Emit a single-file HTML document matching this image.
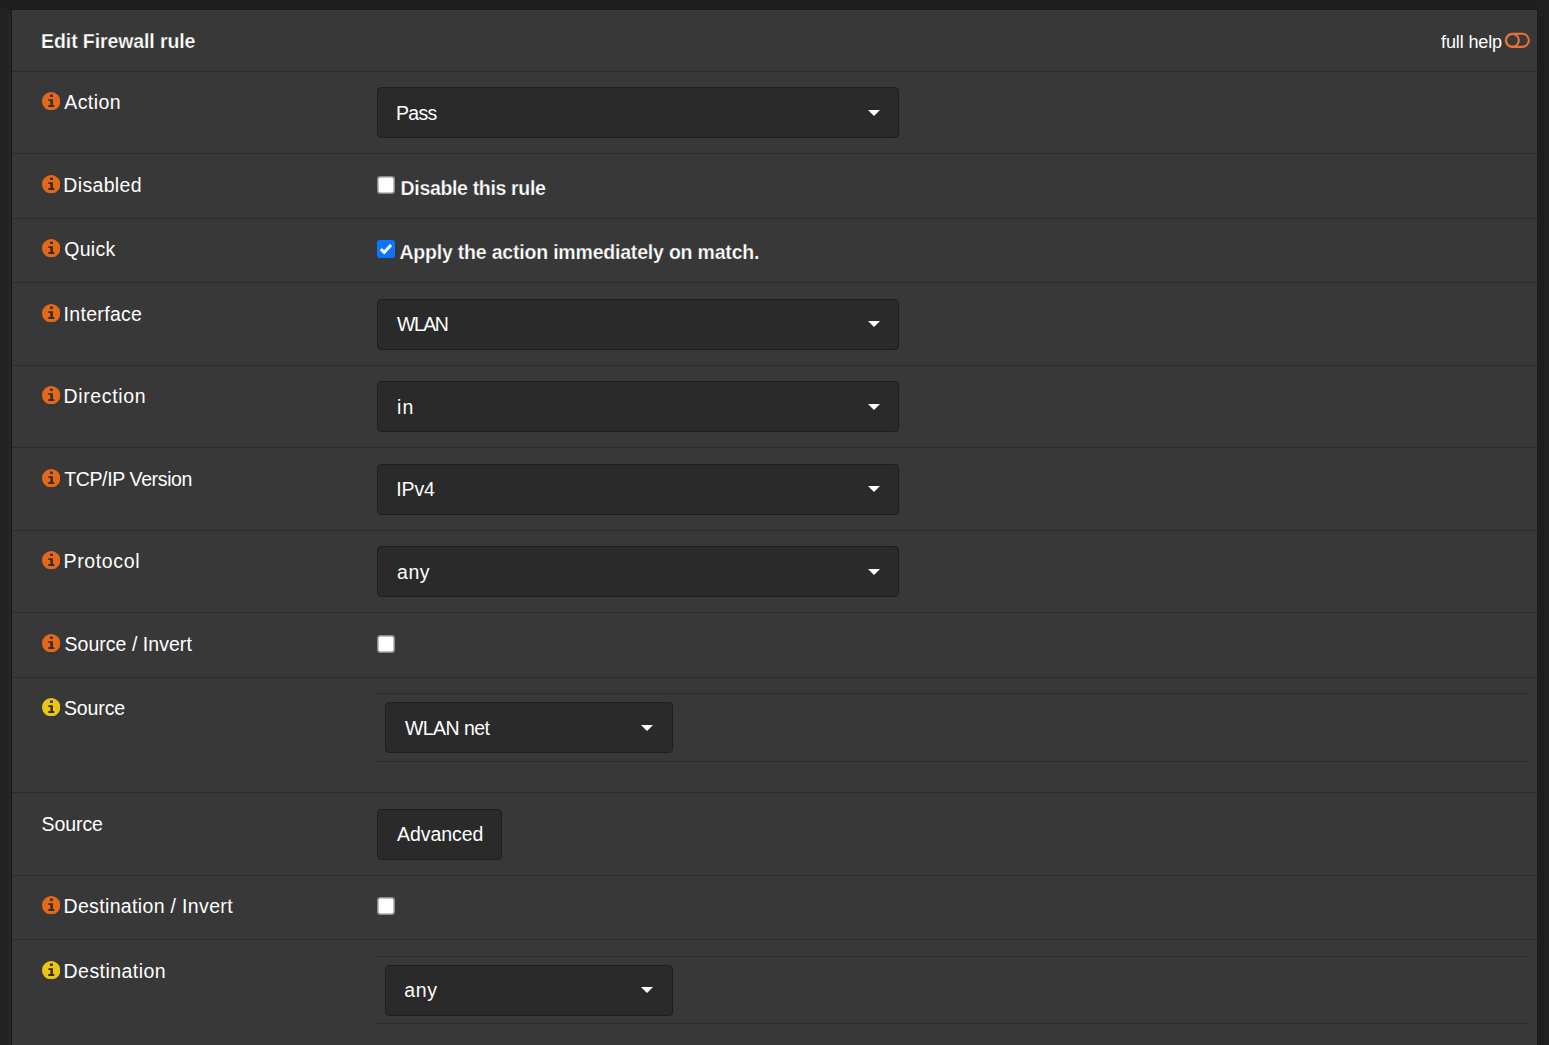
<!DOCTYPE html>
<html><head><meta charset="utf-8"><style>
html,body{margin:0;padding:0;}
body{width:1549px;height:1045px;overflow:hidden;background:#222;position:relative;font-family:"Liberation Sans",sans-serif;color:#ffffff;}
.topstrip{position:absolute;left:0;top:0;width:1549px;height:9px;background:#1f1f1f;}
.rstrip{position:absolute;left:1538px;top:0;width:11px;height:1045px;background:#202020;}
.lstrip{position:absolute;left:8px;top:14px;width:3px;height:1031px;background:#252525;}
.rstrip2{position:absolute;left:1539px;top:16px;width:5px;height:1029px;background:#1c1c1c;}
.panel{position:absolute;left:11px;top:9px;width:1525px;height:1100px;background:#383838;border:1px solid #1a1a1a;}
.t{position:absolute;white-space:nowrap;}
.ic{position:absolute;display:block;}
.sep{position:absolute;left:12px;width:1525px;height:1px;background:#2b2b2b;}
.nsep{position:absolute;left:376px;width:1152px;height:1px;background:#2b2b2b;}
.sel{position:absolute;box-sizing:border-box;background:#2a2a2a;border:1px solid #1e1e1e;border-radius:4px;}
.caret{position:absolute;width:0;height:0;border-left:6.3px solid transparent;border-right:6.3px solid transparent;border-top:6.3px solid #fff;}
</style></head><body>
<div class="topstrip"></div><div class="rstrip"></div><div class="rstrip2"></div><div class="lstrip"></div>
<div class="panel"></div>
<div class="t" style="left:41.10px;top:31.24px;font-size:19.5px;line-height:20px;font-weight:bold;-webkit-text-stroke:0.25px #383838;letter-spacing:-0.100px;">Edit Firewall rule</div>
<div class="t" style="left:1441.00px;top:32.76px;font-size:18px;line-height:18px;letter-spacing:-0.125px;">full help</div>
<svg class="ic" style="left:1504px;top:31px" width="27" height="19" viewBox="0 0 27 19"><rect x="1.9" y="2.8" width="22.9" height="13.1" rx="6.55" fill="none" stroke="#e3733a" stroke-width="2.1"/><circle cx="8.45" cy="9.35" r="6.4" fill="none" stroke="#e3733a" stroke-width="2.1"/></svg>
<div class="sep" style="top:71px"></div>
<div class="sep" style="top:153px"></div>
<div class="sep" style="top:218px"></div>
<div class="sep" style="top:282px"></div>
<div class="sep" style="top:365px"></div>
<div class="sep" style="top:447px"></div>
<div class="sep" style="top:530px"></div>
<div class="sep" style="top:612px"></div>
<div class="sep" style="top:677px"></div>
<div class="sep" style="top:792px"></div>
<div class="sep" style="top:875px"></div>
<div class="sep" style="top:939px"></div>
<div class="t" style="left:64.20px;top:91.74px;font-size:19.5px;line-height:20px;letter-spacing:0.440px;">Action</div>
<svg class="ic" style="left:41.80px;top:91.80px" width="18.4" height="18.4" viewBox="0 0 18 18"><circle cx="9" cy="9" r="9" fill="#e2691b"/><g fill="#3a2c22"><rect x="7.9" y="2.5" width="2.7" height="2.3" rx="0.3"/><path d="M6.2 7.2H10.7V12.8H12.0V14.7H6.2V12.8H8.2V8.8H6.2Z"/></g></svg>
<div class="t" style="left:63.30px;top:174.74px;font-size:19.5px;line-height:20px;letter-spacing:0.343px;">Disabled</div>
<svg class="ic" style="left:41.80px;top:174.80px" width="18.4" height="18.4" viewBox="0 0 18 18"><circle cx="9" cy="9" r="9" fill="#e2691b"/><g fill="#3a2c22"><rect x="7.9" y="2.5" width="2.7" height="2.3" rx="0.3"/><path d="M6.2 7.2H10.7V12.8H12.0V14.7H6.2V12.8H8.2V8.8H6.2Z"/></g></svg>
<div class="t" style="left:64.30px;top:238.74px;font-size:19.5px;line-height:20px;letter-spacing:0.275px;">Quick</div>
<svg class="ic" style="left:41.80px;top:238.80px" width="18.4" height="18.4" viewBox="0 0 18 18"><circle cx="9" cy="9" r="9" fill="#e2691b"/><g fill="#3a2c22"><rect x="7.9" y="2.5" width="2.7" height="2.3" rx="0.3"/><path d="M6.2 7.2H10.7V12.8H12.0V14.7H6.2V12.8H8.2V8.8H6.2Z"/></g></svg>
<div class="t" style="left:63.60px;top:303.74px;font-size:19.5px;line-height:20px;letter-spacing:0.312px;">Interface</div>
<svg class="ic" style="left:41.80px;top:303.80px" width="18.4" height="18.4" viewBox="0 0 18 18"><circle cx="9" cy="9" r="9" fill="#e2691b"/><g fill="#3a2c22"><rect x="7.9" y="2.5" width="2.7" height="2.3" rx="0.3"/><path d="M6.2 7.2H10.7V12.8H12.0V14.7H6.2V12.8H8.2V8.8H6.2Z"/></g></svg>
<div class="t" style="left:63.50px;top:385.74px;font-size:19.5px;line-height:20px;letter-spacing:0.637px;">Direction</div>
<svg class="ic" style="left:41.80px;top:385.80px" width="18.4" height="18.4" viewBox="0 0 18 18"><circle cx="9" cy="9" r="9" fill="#e2691b"/><g fill="#3a2c22"><rect x="7.9" y="2.5" width="2.7" height="2.3" rx="0.3"/><path d="M6.2 7.2H10.7V12.8H12.0V14.7H6.2V12.8H8.2V8.8H6.2Z"/></g></svg>
<div class="t" style="left:64.20px;top:468.74px;font-size:19.5px;line-height:20px;letter-spacing:-0.362px;">TCP/IP Version</div>
<svg class="ic" style="left:41.80px;top:468.80px" width="18.4" height="18.4" viewBox="0 0 18 18"><circle cx="9" cy="9" r="9" fill="#e2691b"/><g fill="#3a2c22"><rect x="7.9" y="2.5" width="2.7" height="2.3" rx="0.3"/><path d="M6.2 7.2H10.7V12.8H12.0V14.7H6.2V12.8H8.2V8.8H6.2Z"/></g></svg>
<div class="t" style="left:63.50px;top:550.74px;font-size:19.5px;line-height:20px;letter-spacing:0.643px;">Protocol</div>
<svg class="ic" style="left:41.80px;top:550.80px" width="18.4" height="18.4" viewBox="0 0 18 18"><circle cx="9" cy="9" r="9" fill="#e2691b"/><g fill="#3a2c22"><rect x="7.9" y="2.5" width="2.7" height="2.3" rx="0.3"/><path d="M6.2 7.2H10.7V12.8H12.0V14.7H6.2V12.8H8.2V8.8H6.2Z"/></g></svg>
<div class="t" style="left:64.50px;top:633.74px;font-size:19.5px;line-height:20px;letter-spacing:0.036px;">Source / Invert</div>
<svg class="ic" style="left:41.80px;top:633.80px" width="18.4" height="18.4" viewBox="0 0 18 18"><circle cx="9" cy="9" r="9" fill="#e2691b"/><g fill="#3a2c22"><rect x="7.9" y="2.5" width="2.7" height="2.3" rx="0.3"/><path d="M6.2 7.2H10.7V12.8H12.0V14.7H6.2V12.8H8.2V8.8H6.2Z"/></g></svg>
<div class="t" style="left:63.90px;top:697.74px;font-size:19.5px;line-height:20px;letter-spacing:-0.100px;">Source</div>
<svg class="ic" style="left:41.80px;top:697.80px" width="18.4" height="18.4" viewBox="0 0 18 18"><circle cx="9" cy="9" r="9" fill="#eac513"/><g fill="#3a2c22"><rect x="7.9" y="2.5" width="2.7" height="2.3" rx="0.3"/><path d="M6.2 7.2H10.7V12.8H12.0V14.7H6.2V12.8H8.2V8.8H6.2Z"/></g></svg>
<div class="t" style="left:41.60px;top:813.74px;font-size:19.5px;line-height:20px;letter-spacing:-0.100px;">Source</div>
<div class="t" style="left:63.50px;top:895.74px;font-size:19.5px;line-height:20px;letter-spacing:0.342px;">Destination / Invert</div>
<svg class="ic" style="left:41.80px;top:895.80px" width="18.4" height="18.4" viewBox="0 0 18 18"><circle cx="9" cy="9" r="9" fill="#e2691b"/><g fill="#3a2c22"><rect x="7.9" y="2.5" width="2.7" height="2.3" rx="0.3"/><path d="M6.2 7.2H10.7V12.8H12.0V14.7H6.2V12.8H8.2V8.8H6.2Z"/></g></svg>
<div class="t" style="left:63.60px;top:960.74px;font-size:19.5px;line-height:20px;letter-spacing:0.440px;">Destination</div>
<svg class="ic" style="left:41.80px;top:960.80px" width="18.4" height="18.4" viewBox="0 0 18 18"><circle cx="9" cy="9" r="9" fill="#eac513"/><g fill="#3a2c22"><rect x="7.9" y="2.5" width="2.7" height="2.3" rx="0.3"/><path d="M6.2 7.2H10.7V12.8H12.0V14.7H6.2V12.8H8.2V8.8H6.2Z"/></g></svg>
<div class="sel" style="left:377px;top:87px;width:522px;height:51px"></div>
<div class="t" style="left:396.10px;top:103.24px;font-size:19.5px;line-height:20px;letter-spacing:-0.767px;">Pass</div>
<div class="caret" style="left:868px;top:109.7px"></div>
<div class="sel" style="left:377px;top:299px;width:522px;height:51px"></div>
<div class="t" style="left:397.10px;top:314.24px;font-size:19.5px;line-height:20px;letter-spacing:-1.533px;">WLAN</div>
<div class="caret" style="left:868px;top:320.7px"></div>
<div class="sel" style="left:377px;top:381px;width:522px;height:51px"></div>
<div class="t" style="left:396.90px;top:397.24px;font-size:19.5px;line-height:20px;letter-spacing:1.400px;">in</div>
<div class="caret" style="left:868px;top:403.7px"></div>
<div class="sel" style="left:377px;top:464px;width:522px;height:51px"></div>
<div class="t" style="left:396.20px;top:479.24px;font-size:19.5px;line-height:20px;letter-spacing:-0.100px;">IPv4</div>
<div class="caret" style="left:868px;top:485.7px"></div>
<div class="sel" style="left:377px;top:546px;width:522px;height:51px"></div>
<div class="t" style="left:397.10px;top:562.24px;font-size:19.5px;line-height:20px;letter-spacing:0.450px;">any</div>
<div class="caret" style="left:868px;top:568.7px"></div>
<svg class="ic" style="left:377px;top:176px" width="18" height="18" viewBox="0 0 18 18"><rect x="0.75" y="0.75" width="16.5" height="16.5" rx="2.5" fill="#fff" stroke="#8a8a8a" stroke-width="1.5"/></svg>
<div class="t" style="left:400.60px;top:178.24px;font-size:19.5px;line-height:20px;font-weight:bold;-webkit-text-stroke:0.25px #383838;letter-spacing:-0.337px;">Disable this rule</div>
<svg class="ic" style="left:377px;top:240px" width="18" height="18" viewBox="0 0 18 18"><rect x="0" y="0" width="18" height="18" rx="3" fill="#0b75ff"/><path d="M3.8 9.1L7.2 12.4L14 5" stroke="#fff" stroke-width="3" fill="none" stroke-linecap="butt"/></svg>
<div class="t" style="left:399.40px;top:242.24px;font-size:19.5px;line-height:20px;font-weight:bold;-webkit-text-stroke:0.25px #383838;letter-spacing:-0.197px;">Apply the action immediately on match.</div>
<svg class="ic" style="left:377px;top:635px" width="18" height="18" viewBox="0 0 18 18"><rect x="0.75" y="0.75" width="16.5" height="16.5" rx="2.5" fill="#fff" stroke="#8a8a8a" stroke-width="1.5"/></svg>
<svg class="ic" style="left:377px;top:897px" width="18" height="18" viewBox="0 0 18 18"><rect x="0.75" y="0.75" width="16.5" height="16.5" rx="2.5" fill="#fff" stroke="#8a8a8a" stroke-width="1.5"/></svg>
<div class="nsep" style="top:693px"></div>
<div class="nsep" style="top:761px"></div>
<div class="nsep" style="top:956px"></div>
<div class="nsep" style="top:1023px"></div>
<div class="sel" style="left:385px;top:702px;width:288px;height:51px"></div>
<div class="t" style="left:404.90px;top:718.24px;font-size:19.5px;line-height:20px;letter-spacing:-0.543px;">WLAN net</div>
<div class="caret" style="left:641px;top:724.7px"></div>
<div class="sel" style="left:385px;top:965px;width:288px;height:51px"></div>
<div class="t" style="left:404.30px;top:980.24px;font-size:19.5px;line-height:20px;letter-spacing:0.600px;">any</div>
<div class="caret" style="left:641px;top:986.7px"></div>
<div class="sel" style="left:377px;top:809px;width:125px;height:51px"></div>
<div class="t" style="left:397.10px;top:824.24px;font-size:19.5px;line-height:20px;letter-spacing:-0.071px;">Advanced</div>
</body></html>
